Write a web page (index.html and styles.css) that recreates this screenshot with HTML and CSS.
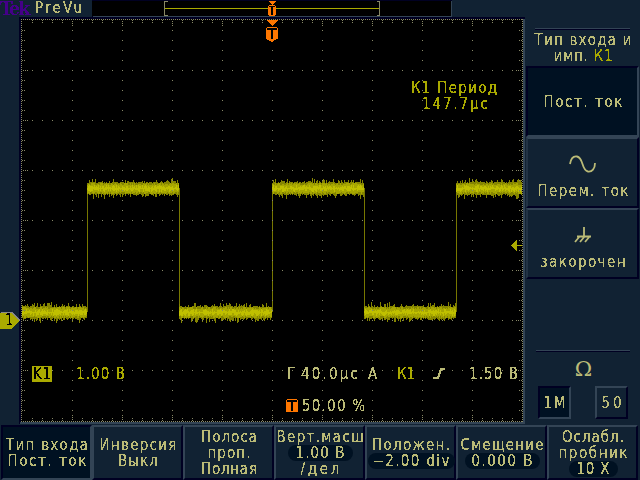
FILE: index.html
```html
<!DOCTYPE html>
<html lang="ru">
<head>
<meta charset="utf-8">
<title>Tek PreVu</title>
<link rel="stylesheet" href="styles.css">
</head>
<body>
<svg class="defs" width="0" height="0" aria-hidden="true">
  <filter id="crisp" x="0" y="0" width="100%" height="100%" color-interpolation-filters="sRGB">
    <feComponentTransfer><feFuncA type="discrete" tableValues="0 0 0 1 1 1 1 1"/></feComponentTransfer>
  </filter>
</svg>
<div class="upper">
  <div class="scope">
    <header class="topbar">
      <div class="brand"><span class="tek" data-w="30">Tek</span><span class="mode" data-w="47">PreVu</span></div>
      <svg class="record" width="360" height="17" viewBox="92 0 360 17" shape-rendering="crispEdges">
        <rect x="92" y="0" width="360" height="17" class="navy"/>
        <rect x="93" y="1" width="359" height="16" class="edge"/>
        <rect x="92" y="1" width="359" height="15"/>
        <path d="M167.500 1.500H164.500V15.500H167.500M376.500 1.500H379.500V15.500H376.500" class="bracket"/>
        <rect x="165" y="8" width="214" height="1" class="yellow"/>
        <path d="M269 1h7v1h-1v1h-1v1h-1v1h-1v-1h-1v-1h-1v-1h-1zM268 6h8v9h-1v1h-6v-1h-1z" class="orange"/>
        <rect x="269" y="5" width="6" height="1" class="orange"/>
        <path d="M269 6h6v1h-2v8h-2v-8h-2z"/>
      </svg>
    </header>
    <svg class="plot" width="526" height="408" viewBox="0 17 526 408" shape-rendering="crispEdges">
      <rect x="19" y="17" width="506" height="2" class="navy"/>
      <rect x="19" y="17" width="2" height="407" class="navy"/>
      <rect x="20" y="422" width="505" height="2" class="edge"/>
      <rect x="523" y="19" width="2" height="405" class="edge"/>
      <rect x="21" y="19" width="502" height="403"/>
      <path id="edges" class="edges"/>
      <path id="noise-dim" class="n1"/>
      <path id="noise-mid" class="n2"/>
      <path id="noise-hot" class="n3"/>
      <path id="grid" class="grid"/>
      <path d="M267 20h11v1h-1v1h-1v1h-1v1h-1v1h-1v1h-1v-1h-1v-1h-1v-1h-1v-1h-1v-1h-1z" class="orange"/>
      <path d="M266 28h12v11h-2v1h-2v1h-1v1h-2v-1h-2v-1h-2v-1h-1z M267 27h10v1h-10z" class="orange"/>
      <path d="M267 28h10v2h-4v9h-2v-9h-4z"/>
      <path d="M511 245h1v-1h1v-1h1v-1h1v-1h1v-1h1v5h5v1h-5v5h-1v-1h-1v-1h-1v-1h-1v-1h-1v-1h-1z" class="yellow"/>
      <path d="M0 312.500H12L20 320.500L12 328.500H0z" class="yellow"/>
      <path d="M1 312.500H12L20 320.500" class="tagline"/>
      <rect x="32" y="366" width="20" height="16" class="yellow"/>
      <path d="M433 378H438L441 369H445" class="slope"/>
      <rect x="286" y="400" width="12" height="12" class="orange"/><rect x="287" y="399" width="10" height="1" class="orange"/>
      <path d="M287 400h10v2h-4v9h-2v-9h-4z"/>
      <g class="crisp">
        <text x="5" y="325" class="ink">1</text>
        <text x="411" y="93" textLength="86" class="y">К1 Период</text>
        <text x="422" y="109" textLength="66" class="y">147.7µс</text>
        <text x="33" y="379" textLength="18" class="ink">K1</text>
        <text x="76" y="379" textLength="49" class="y">1.00 В</text>
        <text x="287" y="379">Г</text>
        <text x="301" y="379" textLength="57">40.0µс</text>
        <text x="368" y="379">А</text>
        <text x="397" y="379" textLength="18" class="y">К1</text>
        <text x="469" y="379" textLength="49">1.50 В</text>
        <text x="302" y="411" textLength="63">50.00 %</text>
      </g>
    </svg>
  </div>
  <aside class="side">
    <h1 class="title"><span data-w="97">Тип входа и</span><span data-w="59">имп. <b>К1</b></span></h1>
    <div class="option on"><span data-w="79">Пост. ток</span></div>
    <div class="option">
      <svg class="icon" width="28" height="18" viewBox="0 0 28 18"><path d="M1 9C2 3 5 1 8 1.500C15 3 12 15 19 16.500C23 17 26 14 26 8"/></svg>
      <span data-w="91">Перем. ток</span>
    </div>
    <div class="option">
      <svg class="icon" width="18" height="18" viewBox="0 0 18 18"><path d="M10 1V10M3 10.500H17M6 10L1 16M11 10L6 16M16 10L11 16"/></svg>
      <span data-w="85">закорочен</span>
    </div>
    <section class="impedance">
      <div class="ohm">Ω</div>
      <div class="pair"><div class="key on"><span data-w="22">1М</span></div><div class="key"><span data-w="20">50</span></div></div>
    </section>
  </aside>
</div>
<nav class="menu">
  <div class="tab on"><span data-w="82">Тип входа</span><span data-w="79">Пост. ток</span></div>
  <div class="tab"><span data-w="77">Инверсия</span><span data-w="40">Выкл</span></div>
  <div class="tab"><span data-w="56">Полоса</span><span data-w="43">проп.</span><span data-w="56">Полная</span></div>
  <div class="tab"><span data-w="87">Верт.масш</span><div class="pill p65"><span data-w="49">1.00 В</span></div><span data-w="39">/дел</span></div>
  <div class="tab"><span data-w="78">Положен.</span><div class="pill p88"><span data-w="77">−2.00 div</span></div></div>
  <div class="tab"><span data-w="83">Смещение</span><div class="pill p75"><span data-w="61">0.000 В</span></div></div>
  <div class="tab"><span data-w="62">Ослабл.</span><span data-w="69">пробник</span><div class="pill p49"><span data-w="33">10 X</span></div></div>
</nav>
<script src="scope.js"></script>
</body>
</html>
```
FILE: styles.css
```css
* { box-sizing: border-box; }
body {
  margin: 0; width: 640px; height: 480px; overflow: hidden;
  background: #112233; color: #bbbb77;
  font: 15px/16px "DejaVu Sans Condensed", "DejaVu Sans", sans-serif;
  font-stretch: condensed;
}
.defs { position: absolute; }
svg { display: block; }
span { white-space: nowrap; }
.upper { display: flex; height: 425px; }
.scope { width: 526px; }
.topbar { display: flex; height: 17px; }
.brand { width: 92px; display: flex; gap: 5px; filter: url(#crisp); }
.tek { color: #440088; font: bold 19px/16px "DejaVu Serif", serif; font-stretch: condensed; }
.mode { line-height: 16px; }
.navy { fill: #000022; }
.edge { fill: #334455; }
.yellow { fill: #aaaa00; }
.orange { fill: #ff7700; }
.bracket { fill: none; stroke: #888866; }
.grid { fill: #888866; }
.edges { fill: #777700; }
.n1 { fill: #858500; }
.n2 { fill: #a6a600; }
.n3 { fill: #c0c000; }
.tagline { fill: none; stroke: #888888; }
.slope { fill: none; stroke: #bbbb77; stroke-width: 2; }
.crisp { filter: url(#crisp); }
.plot text { fill: #bbbb77; }
.plot .y { fill: #aaaa00; }
.plot .ink { fill: #000; }

.side { width: 114px; padding-top: 28px; display: flex; flex-direction: column; }
.title {
  margin: 0 10px 0 9px; height: 38px; padding: 3px 0 0 1px; font: inherit;
  border-top: 1px solid #334455; box-shadow: inset 0 1px #000022;
  display: flex; flex-direction: column; align-items: center;
}
.title b { font-weight: normal; color: #aaaa00; }
.title span, .option span, .key span, .tab span { filter: url(#crisp); }
.option {
  height: 71px; margin-right: 1px;
  display: flex; flex-direction: column; align-items: center; justify-content: flex-end;
  padding: 0 0 7px 1px;
  border: 2px solid #000022; border-top-color: #334455; border-left-color: #223344;
}
.option.on {
  background: #001122; justify-content: center; padding: 0 0 0 1px;
  border-color: #000022 #334455 #334455 #000022;
}
.icon { fill: none; stroke: #bbbb77; stroke-width: 1.8; margin-bottom: 10px; }
.impedance {
  margin: 71px 10px 0; border-top: 1px solid #334455; box-shadow: inset 0 1px #000022;
}
.ohm { text-align: center; font: 21px/20px "DejaVu Serif", serif; padding: 8px 0 0 1px; height: 35px; }
.pair { display: flex; justify-content: space-between; margin: 0 2px; }
.key {
  width: 33px; height: 33px; display: grid; place-content: center;
  border: 2px solid #000022; border-top-color: #334455; border-left-color: #334455;
}
.key.on { background: #001122; border-color: #000022 #334455 #334455 #000022; }

.menu { display: grid; grid-template-columns: repeat(7, 91px); padding-left: 1px; height: 55px; }
.tab {
  display: flex; flex-direction: column; align-items: center; justify-content: center;
  padding-left: 1px;
  border: 2px solid #000022; border-top-color: #334455; border-left-color: #334455;
}
.tab.on { background: #001122; border-color: #000022 #334455 #334455 #000022; }
.pill { background: #001122; border-radius: 8px; height: 16px; display: flex; justify-content: center; }
.p49 { width: 49px; }
.p65 { width: 65px; }
.p75 { width: 75px; }
.p88 { width: 87px; }
```
FILE: scope.js
```js
// Spread each label to its nominal width.
document.querySelectorAll('[data-w]').forEach(el => {
  const n = el.textContent.length;
  const gap = (Number(el.dataset.w) - el.getBoundingClientRect().width) / (n - 1);
  el.style.letterSpacing = gap + 'px';
  el.style.marginRight = -gap + 'px';
});

const dot = (x, y) => `M${x} ${y}h1v1h-1z`;

// Graticule: 10 x 8 divisions of 50 px, five dots each.
let grid = '';
for (let x = 21; x <= 522; x += 2) grid += dot(x, 19) + dot(x, 421);
for (let y = 19; y <= 421; y += 2) grid += dot(21, y) + dot(522, y);
for (let x = 32; x < 522; x += 10) {
  const major = (x - 22) % 50 === 0;
  for (const d of major ? [2, 4, 6] : [1, 3]) grid += dot(x, 19 + d) + dot(x, 421 - d);
  for (let y = 70; y < 420; y += 50) grid += dot(x, y);
}
for (let y = 30; y < 420; y += 10) {
  const major = (y - 20) % 50 === 0;
  for (const d of major ? [2, 4, 6] : [1, 3]) grid += dot(21 + d, y) + dot(522 - d, y);
  for (let x = 72; x < 522; x += 50) grid += dot(x, y);
}
document.getElementById('grid').setAttribute('d', grid);

// Noisy square wave.
let seed = 7;
const rnd = () => (seed = (seed * 16807) % 2147483647) / 2147483647;
const flips = [87, 179, 272, 364, 456];
document.getElementById('edges').setAttribute('d', flips.map(x => `M${x} 188h1v124h-1z`).join(''));
const bar = (x, a, b) => `M${x} ${Math.round(a)}h1V${Math.round(b)}h-1z`;
let dim = '', mid = '', hot = '';
for (let x = 22; x < 522; x++) {
  const high = flips.filter(f => x >= f).length % 2 === 1;
  const c = high ? 188.5 : 312.5;
  dim += bar(x, c - 5 - rnd() * 2 - rnd() ** 4 * 4, c + 5 + rnd() * 2 + rnd() ** 4 * 4);
  mid += bar(x, c - 3 - rnd() * 3, c + 3 + rnd() * 3);
  hot += bar(x, c - rnd() * 3.5, c + rnd() * 3.5);
}
document.getElementById('noise-dim').setAttribute('d', dim);
document.getElementById('noise-mid').setAttribute('d', mid);
document.getElementById('noise-hot').setAttribute('d', hot);
```
